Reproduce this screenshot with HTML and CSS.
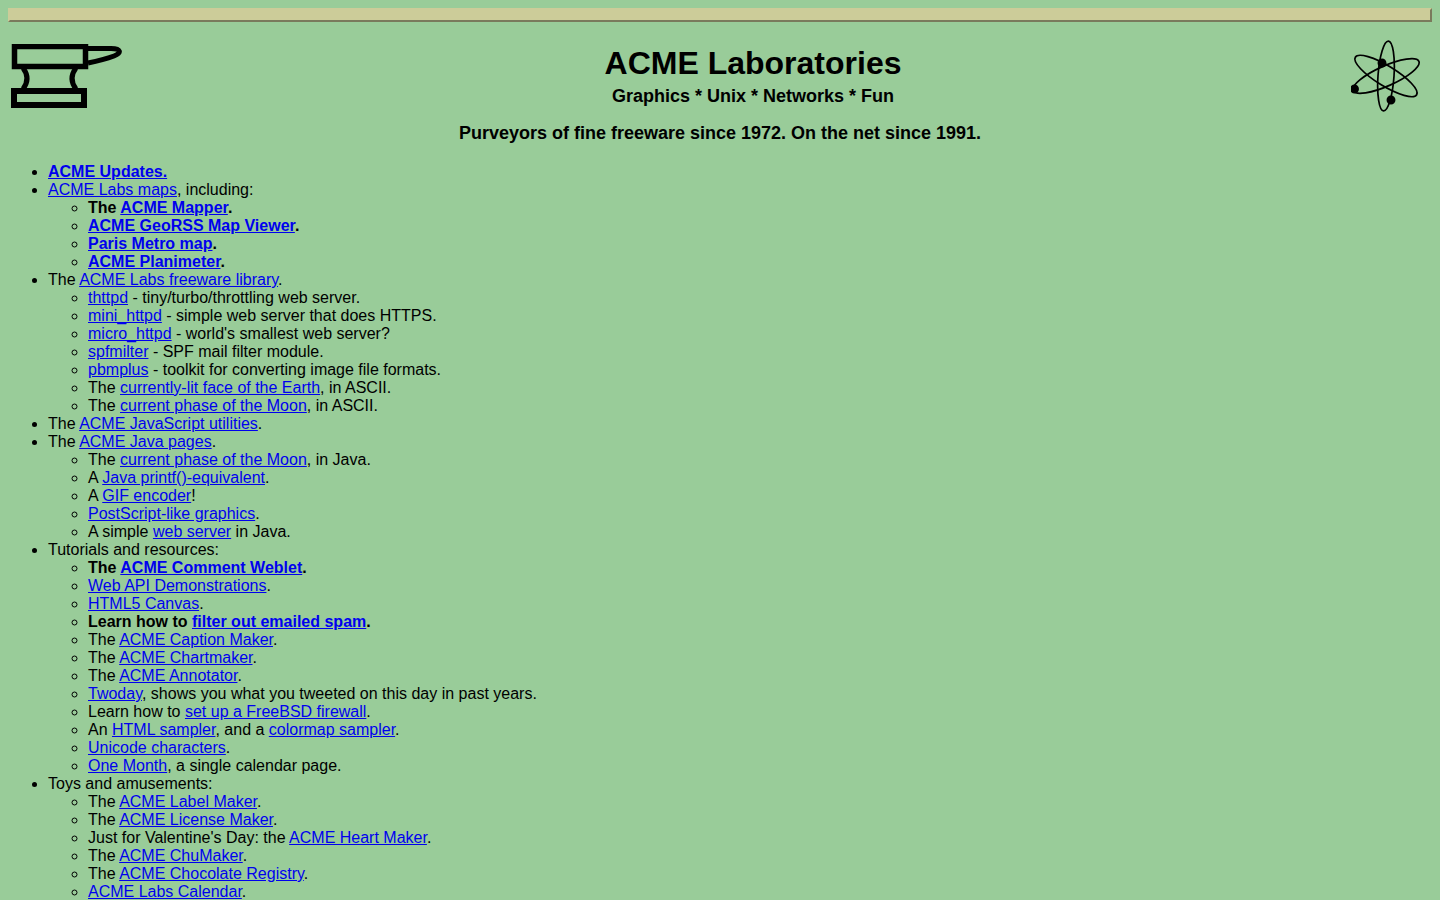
FILE: index.html
```html
<!DOCTYPE html>
<html lang="en">
<head>
<meta charset="utf-8">
<title>ACME Laboratories</title>
<link rel="stylesheet" href="styles.css">
</head>
<body>
<div class="rule"></div>
<header class="masthead">
  <div class="logo-left">
    <svg class="anvil" width="112" height="66" viewBox="0 0 112 66" fill="none" stroke="#000">
      <rect x="3.5" y="2.5" width="71" height="20" stroke-width="5.5"/>
      <rect x="3" y="47" width="70" height="14" stroke-width="6"/>
      <path d="M12 24 Q20 34.5 12 45" stroke-width="5"/>
      <path d="M65 24 Q57 34.5 65 45" stroke-width="5"/>
      <path d="M77 4.5 H100 C110 4.5 111 9 103 12 C95 15 87 17 77 19" stroke-width="5"/>
    </svg>
  </div>
  <div class="titles">
    <h1>ACME Laboratories</h1>
    <h3>Graphics * Unix * Networks * Fun</h3>
  </div>
  <div class="logo-right">
    <svg class="atom" width="70" height="74" viewBox="0 0 70 74" fill="none" stroke="#000" stroke-width="1.7">
      <ellipse cx="35" cy="36" rx="8" ry="35" transform="rotate(4 35 36)"/>
      <ellipse cx="35" cy="36" rx="10" ry="36" transform="rotate(-58.5 35 36)"/>
      <ellipse cx="35" cy="36" rx="10" ry="36" transform="rotate(66 35 36)"/>
      <circle cx="31" cy="23" r="3.6" fill="#000"/>
      <circle cx="3.5" cy="49" r="3.6" fill="#000"/>
      <circle cx="40" cy="60" r="3.6" fill="#000"/>
    </svg>
  </div>
</header>
<h3 class="tagline">Purveyors of fine freeware since 1972. On the net since 1991.</h3>
<ul class="outer">
  <li><b><a href="#">ACME Updates.</a></b></li>
  <li><a href="#">ACME Labs maps</a>, including:
    <ul>
      <li><b>The <a href="#">ACME Mapper</a>.</b></li>
      <li><b><a href="#">ACME GeoRSS Map Viewer</a>.</b></li>
      <li><b><a href="#">Paris Metro map</a>.</b></li>
      <li><b><a href="#">ACME Planimeter</a>.</b></li>
    </ul>
  </li>
  <li>The <a href="#">ACME Labs freeware library</a>.
    <ul>
      <li><a href="#">thttpd</a> - tiny/turbo/throttling web server.</li>
      <li><a href="#">mini_httpd</a> - simple web server that does HTTPS.</li>
      <li><a href="#">micro_httpd</a> - world's smallest web server?</li>
      <li><a href="#">spfmilter</a> - SPF mail filter module.</li>
      <li><a href="#">pbmplus</a> - toolkit for converting image file formats.</li>
      <li>The <a href="#">currently-lit face of the Earth</a>, in ASCII.</li>
      <li>The <a href="#">current phase of the Moon</a>, in ASCII.</li>
    </ul>
  </li>
  <li>The <a href="#">ACME JavaScript utilities</a>.</li>
  <li>The <a href="#">ACME Java pages</a>.
    <ul>
      <li>The <a href="#">current phase of the Moon</a>, in Java.</li>
      <li>A <a href="#">Java printf()-equivalent</a>.</li>
      <li>A <a href="#">GIF encoder</a>!</li>
      <li><a href="#">PostScript-like graphics</a>.</li>
      <li>A simple <a href="#">web server</a> in Java.</li>
    </ul>
  </li>
  <li>Tutorials and resources:
    <ul>
      <li><b>The <a href="#">ACME Comment Weblet</a>.</b></li>
      <li><a href="#">Web API Demonstrations</a>.</li>
      <li><a href="#">HTML5 Canvas</a>.</li>
      <li><b>Learn how to <a href="#">filter out emailed spam</a>.</b></li>
      <li>The <a href="#">ACME Caption Maker</a>.</li>
      <li>The <a href="#">ACME Chartmaker</a>.</li>
      <li>The <a href="#">ACME Annotator</a>.</li>
      <li><a href="#">Twoday</a>, shows you what you tweeted on this day in past years.</li>
      <li>Learn how to <a href="#">set up a FreeBSD firewall</a>.</li>
      <li>An <a href="#">HTML sampler</a>, and a <a href="#">colormap sampler</a>.</li>
      <li><a href="#">Unicode characters</a>.</li>
      <li><a href="#">One Month</a>, a single calendar page.</li>
    </ul>
  </li>
  <li>Toys and amusements:
    <ul>
      <li>The <a href="#">ACME Label Maker</a>.</li>
      <li>The <a href="#">ACME License Maker</a>.</li>
      <li>Just for Valentine's Day: the <a href="#">ACME Heart Maker</a>.</li>
      <li>The <a href="#">ACME ChuMaker</a>.</li>
      <li>The <a href="#">ACME Chocolate Registry</a>.</li>
      <li><a href="#">ACME Labs Calendar</a>.</li>
    </ul>
  </li>
</ul>
</body>
</html>
```
FILE: styles.css
```css
html {
  background: #99cc99;
}
body {
  margin: 8px;
  background: #99cc99;
  color: #000;
  font-family: "Liberation Sans", Arial, sans-serif;
  font-size: 16px;
  line-height: 18px;
}
a {
  color: #0000ee;
  text-decoration: underline;
}
.rule {
  height: 10px;
  background: #cccc99;
  border: 2px solid;
  border-color: #cccc99 #7a7a5c #7a7a5c #cccc99;
}
.masthead {
  display: flex;
  align-items: flex-start;
  margin-top: 7px;
}
.logo-left {
  width: 147px;
  padding: 15px 0 0 3px;
  box-sizing: border-box;
  flex: none;
}
.logo-right {
  width: 81px;
  padding-top: 11px;
  flex: none;
}
.anvil, .atom {
  display: block;
}
.titles {
  flex: 1;
  text-align: center;
}
h1 {
  margin: 16px 0 0;
  font-size: 32px;
  line-height: 37px;
  font-weight: bold;
}
h3 {
  margin: 0;
  font-size: 18px;
  line-height: 21px;
  font-weight: bold;
}
.titles h3 {
  margin-top: 4px;
}
.tagline {
  margin-top: 9px;
  text-align: center;
}
ul {
  margin: 0;
  padding-left: 40px;
}
.outer {
  margin-top: 19px;
  list-style-type: disc;
}
.outer ul {
  list-style-type: circle;
}
```
